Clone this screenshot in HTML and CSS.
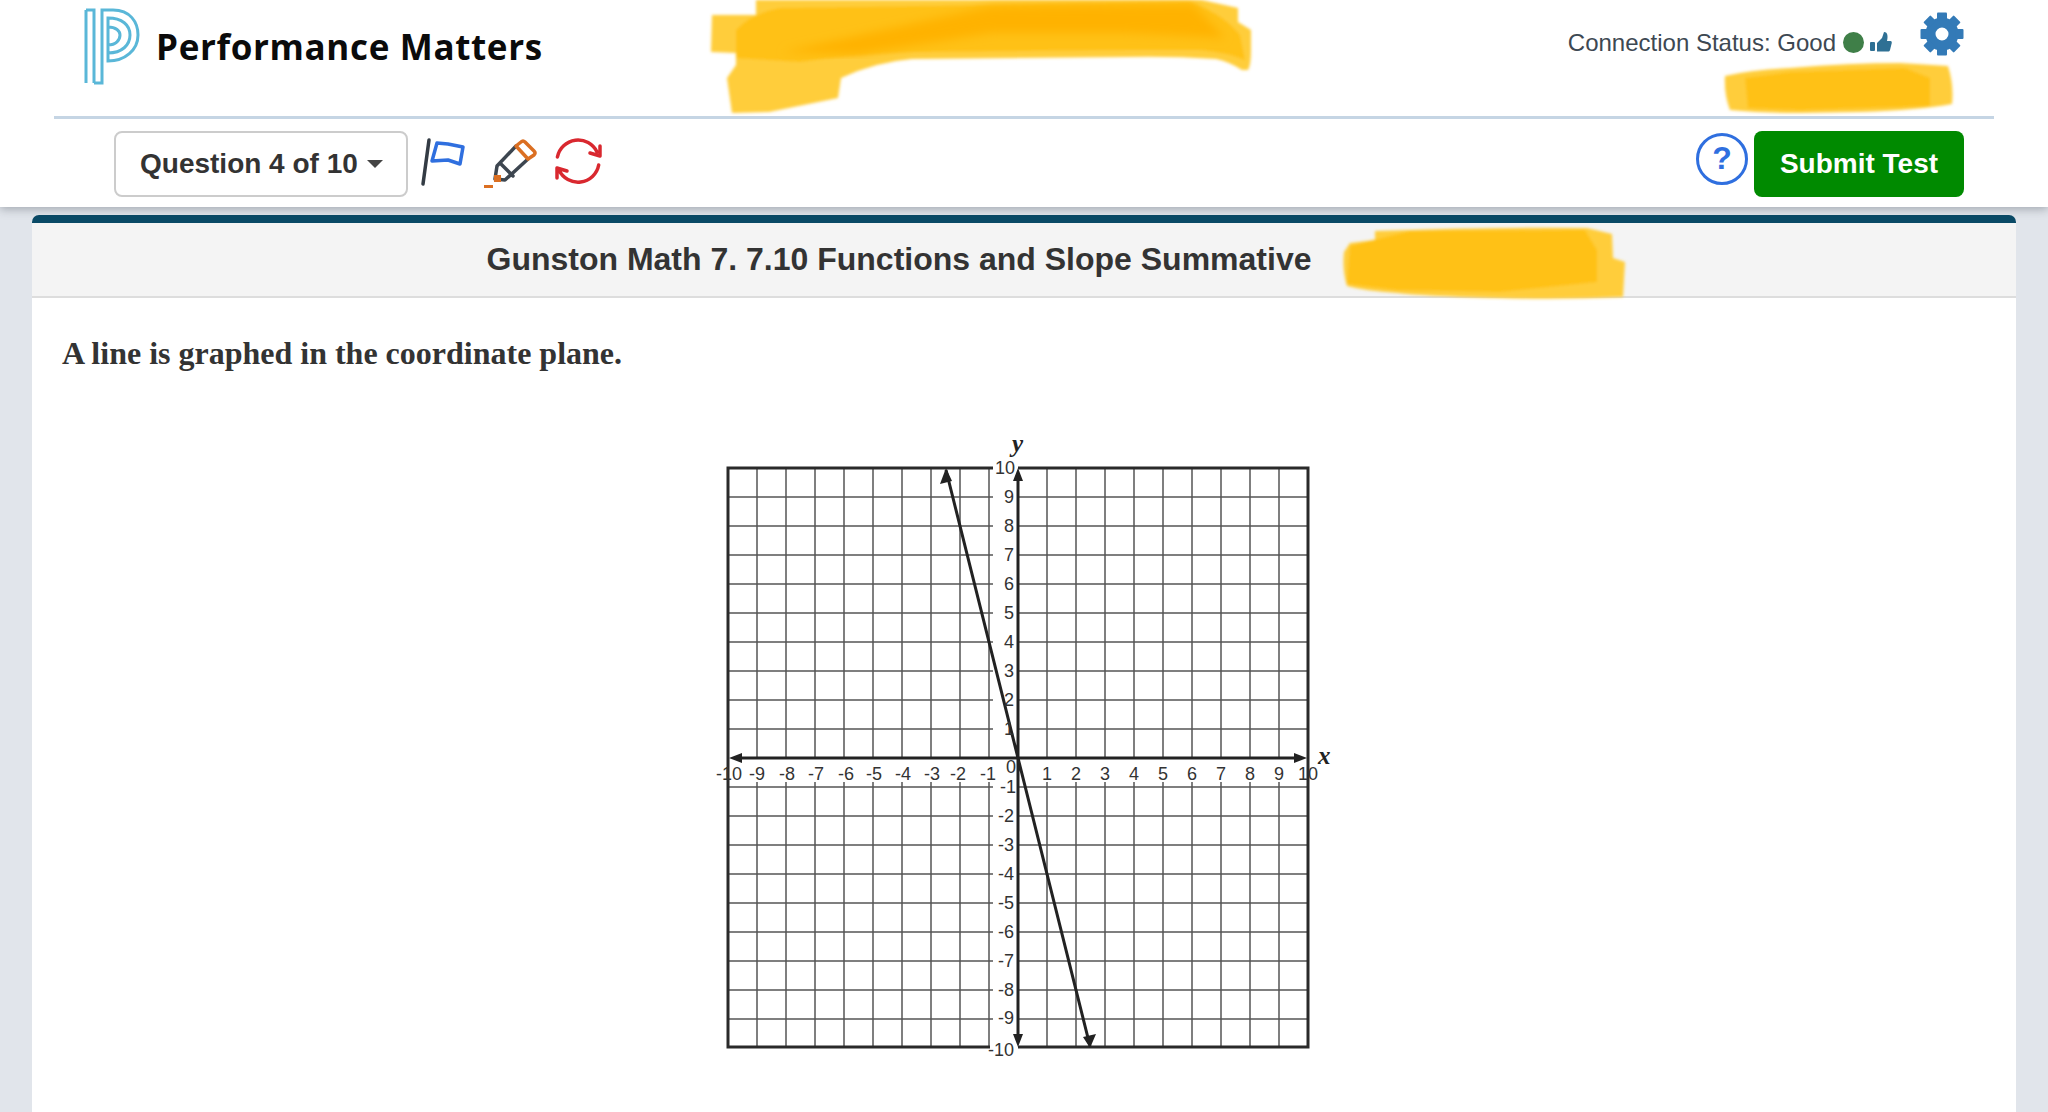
FILE: index.html
```html
<!DOCTYPE html>
<html lang="en">
<head>
    <meta charset="UTF-8">
    <title>Performance Matters</title>
    <link rel="stylesheet" href="styles.css">
</head>
<body>
    <header class="site-header">
        <div class="brand-row">
            <div class="brand">
                <svg class="brand-logo" viewBox="84 8 56 78" width="56" height="78">
                    <path d="M86 10 V83 M94 83 V10 H86 M94 83 H102 V10 H113 C130 10 138 22 138 35 C138 50 125 61 108 61 V53 C122 53 130 45 130 35 C130 25 122 18 108 18 V53 M108 27 C116 27 120 31 120 35 C120 40 116 45 108 45"/>
                </svg>
                <span class="brand-name">Performance Matters</span>
            </div>
            <div class="status-area">
                <span class="status-text">Connection Status: Good</span>
                <span class="status-dot"></span>
                <svg class="thumb-icon" viewBox="0 0 22 20" width="22" height="20">
                    <rect x="0" y="10" width="5" height="9" rx="1"/>
                    <path d="M7 11 L12 6 L14 0 C18 0 18 5 17 9 H20.500 C22 9 22 11 21.500 12 L20 18 C19.700 19 19 19.500 18 19.500 H7 Z"/>
                </svg>
                <svg class="gear-icon" viewBox="0 0 44 44" width="44" height="44">
                    <circle class="gear-ring" cx="22" cy="22" r="11.500"/>
                    <rect x="17" y="0.500" width="10" height="8" rx="1"/>
                    <rect x="17" y="0.500" width="10" height="8" rx="1" transform="rotate(45 22 22)"/>
                    <rect x="17" y="0.500" width="10" height="8" rx="1" transform="rotate(90 22 22)"/>
                    <rect x="17" y="0.500" width="10" height="8" rx="1" transform="rotate(135 22 22)"/>
                    <rect x="17" y="0.500" width="10" height="8" rx="1" transform="rotate(180 22 22)"/>
                    <rect x="17" y="0.500" width="10" height="8" rx="1" transform="rotate(225 22 22)"/>
                    <rect x="17" y="0.500" width="10" height="8" rx="1" transform="rotate(270 22 22)"/>
                    <rect x="17" y="0.500" width="10" height="8" rx="1" transform="rotate(315 22 22)"/>
                </svg>
            </div>
        </div>
        <div class="header-rule"></div>
        <div class="tools-row">
            <button class="question-btn">Question 4 of 10<span class="caret"></span></button>
            <svg class="tool-icons" viewBox="420 138 184 54" width="184" height="54">
                <path class="ic-pole" d="M429 141 L423 185"/>
                <path class="ic-flag" d="M437 144 L448 145 L463 148 L460 165 L448 161 L432 162 Z"/>
                <path class="ic-pen" d="M516 147 L497 167 L495 180 L505 181 L528 160 M501 165 L513 177"/>
                <path class="ic-eraser" d="M516 147 L521 143 Q523 141 525 143 L534 152 Q536 154 534 156 L528 160 Z"/>
                <rect class="ic-tip" x="494" y="176" width="7" height="7"/>
                <rect class="ic-tip" x="484" y="186" width="9" height="3"/>
                <path class="ic-sync" d="M557.400 158 A21 21 0 0 1 597 153 M590 154 L600 157 L600 147 M598.700 166 A21 21 0 0 1 559 171 M567 172 L557 169 L557 179"/>
            </svg>
            <div class="tools-right">
                <span class="help-btn">?</span>
                <button class="submit-btn">Submit Test</button>
            </div>
        </div>
    </header>

    <main class="test-card">
        <h1 class="test-title">Gunston Math 7. 7.10 Functions and Slope Summative</h1>
        <p class="question-text">A line is graphed in the coordinate plane.</p>
        <div class="figure">
            <svg class="graph" viewBox="704 430 640 640" width="640" height="640">
                <path class="grid" d="M757 468 V758 M757 782 V1047 M786 468 V758 M786 782 V1047 M815 468 V758 M815 782 V1047 M844 468 V758 M844 782 V1047 M873 468 V758 M873 782 V1047 M902 468 V758 M902 782 V1047 M931 468 V758 M931 782 V1047 M960 468 V758 M960 782 V1047 M989 468 V758 M989 782 V1047 M1047 468 V758 M1047 782 V1047 M1076 468 V758 M1076 782 V1047 M1105 468 V758 M1105 782 V1047 M1134 468 V758 M1134 782 V1047 M1163 468 V758 M1163 782 V1047 M1192 468 V758 M1192 782 V1047 M1221 468 V758 M1221 782 V1047 M1250 468 V758 M1250 782 V1047 M1279 468 V758 M1279 782 V1047"/>
                <path class="grid" d="M728 497 H993 M1018 497 H1308 M728 526 H993 M1018 526 H1308 M728 555 H993 M1018 555 H1308 M728 584 H993 M1018 584 H1308 M728 613 H993 M1018 613 H1308 M728 642 H993 M1018 642 H1308 M728 671 H993 M1018 671 H1308 M728 700 H993 M1018 700 H1308 M728 729 H993 M1018 729 H1308 M728 787 H993 M1018 787 H1308 M728 816 H993 M1018 816 H1308 M728 845 H993 M1018 845 H1308 M728 874 H993 M1018 874 H1308 M728 903 H993 M1018 903 H1308 M728 932 H993 M1018 932 H1308 M728 961 H993 M1018 961 H1308 M728 990 H993 M1018 990 H1308 M728 1019 H993 M1018 1019 H1308"/>
                <path class="frame" d="M993 468 H728 V1047 H990 M1018 1047 H1308 V468 H1018"/>
                <path class="axis" d="M1018 476 V1040 M736 758 H1298 M946 470 L1090 1046"/>
                <path class="arrow" d="M1018 468 L1023 481 L1013 481 Z M1018 1047 L1023 1034 L1013 1034 Z M729 758 L742 753 L742 763 Z M1307 758 L1294 753 L1294 763 Z M946 468 L952 481 L940 484 Z M1090 1048 L1096 1034 L1083 1037 Z"/>

                <g class="labels-x">
                    <text x="729" y="780">-10</text><text x="757" y="780">-9</text><text x="787" y="780">-8</text><text x="816" y="780">-7</text><text x="846" y="780">-6</text><text x="874" y="780">-5</text><text x="903" y="780">-4</text><text x="932" y="780">-3</text><text x="958" y="780">-2</text><text x="988" y="780">-1</text>
                    <text x="1047" y="780">1</text><text x="1076" y="780">2</text><text x="1105" y="780">3</text><text x="1134" y="780">4</text><text x="1163" y="780">5</text><text x="1192" y="780">6</text><text x="1221" y="780">7</text><text x="1250" y="780">8</text><text x="1279" y="780">9</text><text x="1308" y="780">10</text>
                </g>
                <g class="labels-y">
                    <text x="1015" y="474">10</text><text x="1014" y="502.500">9</text><text x="1014" y="531.500">8</text><text x="1014" y="560.500">7</text><text x="1014" y="589.500">6</text><text x="1014" y="618.500">5</text><text x="1014" y="647.500">4</text><text x="1014" y="676.500">3</text><text x="1014" y="705.500">2</text><text x="1014" y="734.500">1</text>
                    <text x="1016" y="773">0</text>
                    <text x="1016" y="793">-1</text><text x="1014" y="821.500">-2</text><text x="1014" y="850.500">-3</text><text x="1014" y="880">-4</text><text x="1014" y="909">-5</text><text x="1014" y="937.500">-6</text><text x="1014" y="967">-7</text><text x="1014" y="995.500">-8</text><text x="1014" y="1024">-9</text><text x="1014" y="1055.500">-10</text>
                </g>
                <text class="axis-name" x="1012" y="452">y</text>
                <text class="axis-name" x="1318" y="764">x</text>
            </svg>
        </div>
    </main>

    <!-- marker scribbles over the screenshot -->
    <svg class="scribbles" viewBox="0 0 2048 1112" width="2048" height="1112">
        <defs>
            <filter id="soft"><feGaussianBlur stdDeviation="1.500"/></filter>
            <filter id="softer"><feGaussianBlur stdDeviation="5"/></filter>
        </defs>
        <g filter="url(#soft)">
            <path class="mark-light" d="M756 0 L1202 0 L1238 8 L1238 22 L1251 30 L1251 50 Q1251 65 1248 70 L1242 70 Q1230 62 1216 59 Q1170 56 1126 57 L912 59 Q875 62 841 78 L838 98 L769 112 L732 113 L727 78 L736 65 L736 53 L711 52 L712 15 L756 15 Z"/>
            <path class="mark-mid" d="M736 30 Q750 14 780 8 L1190 2 Q1225 15 1240 35 L1245 60 Q1225 52 1200 50 L1126 50 L912 52 Q850 55 800 62 L736 58 Z"/>
            <path class="mark-light" d="M1725 76 Q1750 70 1790 68 Q1850 63 1900 63 L1948 66 Q1954 85 1952 104 Q1920 110 1860 112 L1800 113 Q1760 113 1730 110 Q1724 95 1725 76 Z"/>
            <path class="mark-mid" d="M1745 78 L1790 72 L1905 68 L1930 78 L1930 106 L1800 110 L1748 108 Z"/>
            <path class="mark-light" d="M1375 231 Q1480 227 1587 228 L1612 234 L1613 258 L1625 262 L1623 297 Q1560 300 1497 298 Q1420 296 1397 293 Q1365 291 1347 286 Q1342 270 1344 252 L1350 243 L1375 240 Z"/>
            <path class="mark-mid" d="M1350 246 L1410 231 L1585 230 L1597 250 L1597 282 L1500 292 L1397 290 L1347 284 Z"/>
        </g>
        <path class="mark-deep" filter="url(#softer)" d="M783 52 L992 6 L1193 4 L1225 38 L1126 33 L992 33 L858 54 Z"/>
    </svg>
</body>
</html>
```

FILE: styles.css
```css
html, body {
    margin: 0; padding: 0; height: 100%; overflow: hidden;
}
body {
    display: flex; flex-direction: column;
    background: #e1e5eb; color: #333;
    font-family: 'Liberation Sans', Arial, sans-serif;
}
.site-header {
    position: relative; z-index: 2; height: 207px; flex: none; box-sizing: border-box;
    background: #fff; box-shadow: 0 2px 9px rgba(40, 50, 60, 0.35);
}
.brand-row {
    display: flex; justify-content: space-between; height: 116px; padding: 0 84px; box-sizing: border-box;
}
.brand {
    display: flex; align-items: flex-start;
}
.brand-logo {
    margin-top: 8px;
}
.brand-logo path {
    fill: none; stroke: #5ab7d8; stroke-width: 3;
}
.brand-name {
    margin: 23px 0 0 16px;
    font-family: 'Open Sans', sans-serif; font-weight: 700; font-size: 35px; line-height: 48px;
    letter-spacing: 0.65px; color: #0b0b0b;
}
.status-area {
    display: flex; align-items: flex-start;
}
.status-text {
    margin-top: 28px; font-size: 24px; line-height: 29px; color: #3d4852;
}
.status-dot {
    width: 21px; height: 21px; margin: 32px 0 0 7px; border-radius: 50%; background: #3f7f48;
}
.thumb-icon {
    margin: 32px 0 0 6px; fill: #2f7094;
}
.gear-icon {
    margin: 12px 0 0 28px; fill: #337ab7;
}
.gear-ring {
    fill: none; stroke: #337ab7; stroke-width: 10;
}
.header-rule {
    height: 3px; margin: 0 54px; background: #c5d5e4;
}
.tools-row {
    display: flex; align-items: center; padding: 12px 84px 10px 114px;
}
.question-btn {
    display: flex; align-items: center; height: 66px; width: 294px; padding: 0 0 0 24px; box-sizing: border-box;
    background: #fff; border: 2px solid #ccc; border-radius: 8px;
    font-family: inherit; font-size: 28px; font-weight: 700; color: #333;
}
.caret {
    margin-left: 9px; border-style: solid; border-width: 8px 8px 0; border-color: #444 transparent transparent;
}
.tool-icons {
    margin-left: 12px; fill: none; stroke-linecap: round; stroke-linejoin: round;
}
.ic-pole {
    stroke: #333b44; stroke-width: 3.5;
}
.ic-flag {
    stroke: #2f6fdf; stroke-width: 3.5;
}
.ic-pen {
    stroke: #3d4650; stroke-width: 3.5;
}
.ic-eraser {
    stroke: #db6f22; stroke-width: 3.5;
}
.ic-tip {
    fill: #db6f22; stroke: none;
}
.ic-sync {
    stroke: #d9282f; stroke-width: 3.5;
}
.tools-right {
    display: flex; align-items: center; gap: 6px; margin-left: auto;
}
.help-btn {
    width: 52px; height: 52px; margin-bottom: 10px; box-sizing: border-box; border: 3px solid #2f6fdf; border-radius: 50%;
    text-align: center; font-size: 32px; line-height: 44px; font-weight: 700; color: #2f6fdf;
}
.submit-btn {
    width: 210px; height: 66px; background: #008a00; border: none; border-radius: 8px;
    font-family: inherit; font-size: 28px; font-weight: 700; color: #fff;
}
.test-card {
    flex: 1; margin: 8px 32px 0; background: #fff;
    border-top: 8px solid #0a4a66; border-radius: 7px 7px 0 0;
}
.test-title {
    height: 75px; margin: 0; padding-right: 250px; box-sizing: border-box;
    background: #f4f4f4; border-bottom: 2px solid #ddd;
    text-align: center; font-size: 32px; line-height: 73px; font-weight: 700; color: #333;
}
.question-text {
    margin: 38px 0 0 30px;
    font-family: 'Liberation Serif', 'Times New Roman', serif; font-size: 32px; line-height: 34px; font-weight: 700;
}
.figure {
    display: flex; justify-content: center; margin-top: 60px;
}
.grid {
    fill: none; stroke: #555; stroke-width: 1.5;
}
.frame {
    fill: none; stroke: #2a2a2a; stroke-width: 3;
}
.axis {
    fill: none; stroke: #222; stroke-width: 3;
}
.arrow {
    fill: #222;
}
.labels-x text, .labels-y text {
    font-size: 18px; fill: #333;
}
.labels-x text {
    text-anchor: middle;
}
.labels-y text {
    text-anchor: end;
}
.axis-name {
    font-family: 'Liberation Serif', serif; font-size: 25px; font-weight: 700; font-style: italic; fill: #222;
}
.scribbles {
    position: absolute; top: 0; left: 0; z-index: 3; pointer-events: none;
}
.mark-light {
    fill: #ffcd3a;
}
.mark-mid {
    fill: #ffc114;
}
.mark-deep {
    fill: #ffb200;
}
```
